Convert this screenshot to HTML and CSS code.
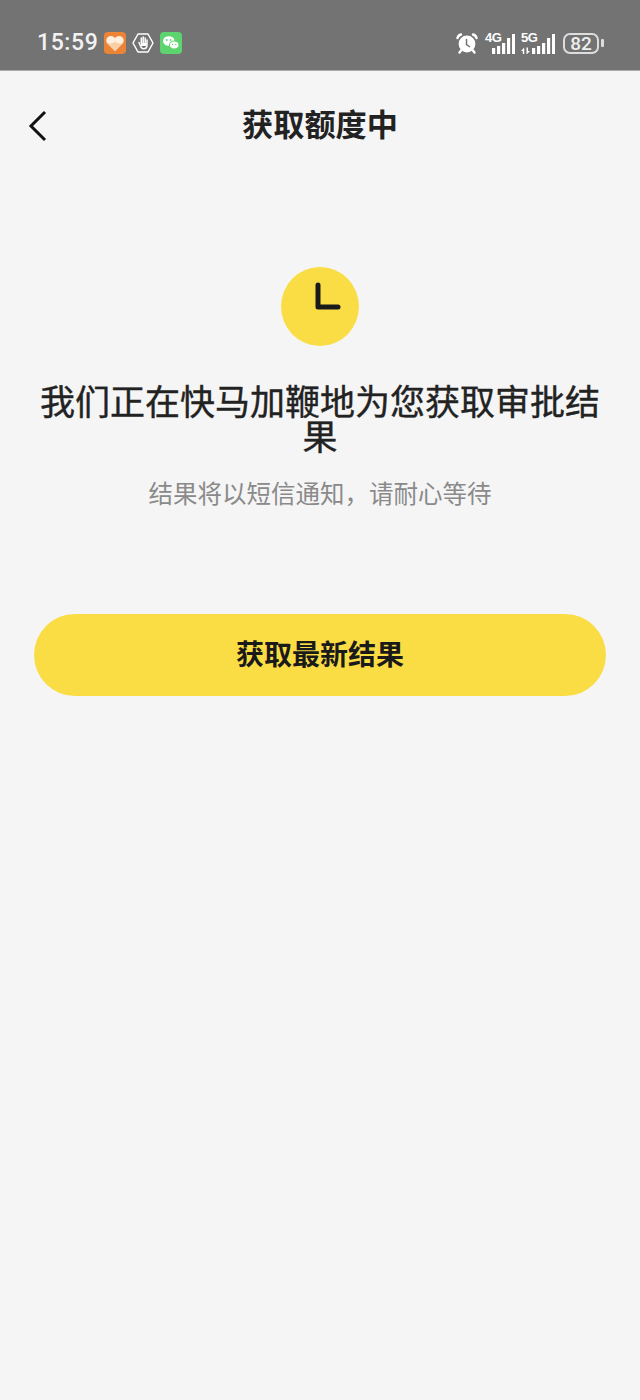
FILE: index.html

```html
<!DOCTYPE html>
<html lang="zh-CN">

<head>
    <meta charset="UTF-8" />
    <meta name="viewport" content="width=device-width, initial-scale=1.0" />
    <title>获取额度中</title>

    <link rel="stylesheet" href="styles.css">
</head>

<body>
    <div class="status-bar">
        <div class="status-left">
            <span class="status-time">15:59</span>
            <svg class="app-icon" width="22" height="22" viewBox="0 0 22 22">
                <rect width="22" height="22" rx="4" fill="#ec8438" />
                <path d="M11 19 L3 11 C1 7.5 3.5 4 7 4 C9 4 10.2 5 11 6.2 C11.8 5 13 4 15 4 C18.5 4 21 7.5 19 11 Z" fill="#fdeedd" />
                <path d="M11 19 L3 11 C6 12.5 9 11.5 11 9.5 C13 11.5 16 12.5 19 11 Z" fill="#f8cfa6" />
            </svg>
            <svg class="app-icon" width="22" height="22" viewBox="0 0 22 22">
                <path d="M6 2 H16 L21 11 L16 20 H6 L1 11 Z" fill="none" stroke="#fff" stroke-width="1.5" stroke-linejoin="round" />
                <path d="M7 10.5 L8.5 14 C9.2 16 10 16.8 11.5 16.8 C13.8 16.8 15 15.4 15 13 V8 M13.2 11 V6 M11.2 11 V5 M9.3 11 V6" fill="none" stroke="#fff" stroke-width="1.5" stroke-linecap="round" />
                <path d="M9 11 H14.5 V14 H9 Z" fill="#fff" />
            </svg>
            <svg class="app-icon" width="22" height="22" viewBox="0 0 22 22">
                <rect width="22" height="22" rx="4" fill="#5ed46f" />
                <ellipse cx="8.8" cy="9" rx="5.8" ry="4.8" fill="#fff" />
                <ellipse cx="14.2" cy="13" rx="4.8" ry="4" fill="#fff" stroke="#5ed46f" stroke-width="1" />
                <circle cx="6.8" cy="8" r="0.9" fill="#5ed46f" />
                <circle cx="10.6" cy="8" r="0.9" fill="#5ed46f" />
                <circle cx="12.6" cy="12.5" r="0.7" fill="#5ed46f" />
                <circle cx="15.8" cy="12.5" r="0.7" fill="#5ed46f" />
            </svg>
        </div>
        <div class="status-right">
            <svg class="alarm" width="22" height="22" viewBox="0 0 22 22">
                <circle cx="11" cy="12" r="8.4" fill="#fff" />
                <path d="M1.5 6 C2 4 3 3 5 2.5 M20.5 6 C20 4 19 3 17 2.5 M5 18.5 L3.5 20.5 M17 18.5 L18.5 20.5" fill="none" stroke="#fff" stroke-width="2.4" stroke-linecap="round" />
                <path d="M10.5 7 V12.5 L14 15" fill="none" stroke="#737373" stroke-width="1.5" />
            </svg>
            <div class="signal signal-4g">
                <span class="signal-type">4G</span>
                <svg width="30" height="20" viewBox="0 0 30 20">
                    <path d="M7 14 H10.2 V20 H7 Z M12 12 H15.2 V20 H12 Z M17 9 H20.2 V20 H17 Z M22 4 H25.2 V20 H22 Z M27 0 H30 V20 H27 Z" fill="#fff" />
                </svg>
            </div>
            <div class="signal signal-5g">
                <span class="signal-type">5G</span>
                <svg width="34" height="20" viewBox="0 0 34 20">
                    <path d="M0 17 L3.2 13.5 V20 H1.8 V17 Z M5.5 13.5 H7 V17 H9 L5.5 20.5 Z M11 14 H14.2 V20 H11 Z M16 12 H19.2 V20 H16 Z M21 9 H24.2 V20 H21 Z M26 4 H29.2 V20 H26 Z M31 0 H34 V20 H31 Z" fill="#fff" />
                </svg>
            </div>
            <div class="battery">
                <span class="battery-body">82</span>
                <span class="battery-tip"></span>
            </div>
        </div>
    </div>

    <header class="nav">
        <svg class="nav-back" width="20" height="32" viewBox="0 0 20 32">
            <path d="M17 2 L3 16 L17 30" fill="none" stroke="#111" stroke-width="3" />
        </svg>
        <h1 class="nav-title">获取额度中</h1>
    </header>

    <main class="result">
        <div class="clock">
            <svg width="28" height="30" viewBox="0 0 28 30">
                <path d="M4 4 V26 H24" fill="none" stroke="#1a1a1a" stroke-width="5" stroke-linecap="round" stroke-linejoin="round" />
            </svg>
        </div>
        <h2 class="result-title">我们正在快马加鞭地为您获取审批结果</h2>
        <p class="result-text">结果将以短信通知，请耐心等待</p>
        <button class="refresh-btn" type="button">获取最新结果</button>
    </main>
</body>

</html>
```

FILE: styles.css

```css
* {
    box-sizing: border-box;
}

body {
    margin: 0;
    min-height: 1400px;
    background: #f5f5f5;
    color: #222;
    font-family: "Noto Sans CJK SC", "Noto Sans", sans-serif;
}

.status-bar {
    height: 71px;
    padding: 32px 36px 0 37px;
    background: #737373;
    border-bottom: 1px solid #aaa;
    display: flex;
    justify-content: space-between;
    align-items: flex-start;
    color: #fff;
}

.status-left {
    display: flex;
    align-items: center;
    gap: 6px;
}

.status-time {
    font-family: Roboto, sans-serif;
    font-size: 23px;
    line-height: 22px;
    font-weight: 500;
    letter-spacing: 0.6px;
    color: #f2f2f2;
}

.status-right {
    display: flex;
    align-items: center;
    gap: 6px;
}

.alarm {
    margin-right: 1px;
}

.signal {
    height: 21px;
    display: flex;
    align-items: flex-end;
    position: relative;
}

.signal svg {
    display: block;
}

.signal-type {
    position: absolute;
    left: 0;
    top: 0;
    font-family: "Liberation Sans", sans-serif;
    font-size: 13px;
    line-height: 10px;
    font-weight: bold;
    letter-spacing: -0.6px;
    color: #fff;
}

.battery {
    display: flex;
    align-items: center;
    gap: 2px;
    margin-left: 2px;
}

.battery-body {
    width: 36px;
    height: 21px;
    border: 2px solid #ddd;
    border-radius: 7px;
    font-family: Roboto, sans-serif;
    font-size: 19px;
    font-weight: 500;
    line-height: 17px;
    text-align: center;
    color: #eee;
}

.battery-tip {
    width: 3px;
    height: 8px;
    background: #ddd;
    border-radius: 1px;
}

.nav {
    height: 109px;
    padding-bottom: 6px;
    display: flex;
    align-items: center;
    justify-content: center;
    position: relative;
}

.nav-back {
    position: absolute;
    left: 28px;
    top: 39px;
}

.nav-title {
    margin: 0;
    font-size: 31.2px;
    line-height: 40px;
    font-weight: 700;
    color: #222;
}

.result {
    padding: 87px 34px 0;
    display: flex;
    flex-direction: column;
    align-items: center;
}

.clock {
    width: 78px;
    height: 79px;
    border-radius: 50%;
    background: #fadd45;
    display: flex;
    align-items: center;
    justify-content: center;
    padding: 0 0 22px 16px;
}

.result-title {
    margin: 36px 0 0;
    width: 564px;
    font-size: 35px;
    line-height: 35px;
    font-weight: 400;
    -webkit-text-stroke: 0.4px #222;
    text-align: center;
    color: #222;
}

.result-text {
    margin: 24px 0 0;
    font-size: 24.5px;
    line-height: 34px;
    text-align: center;
    color: #8a8a8a;
}

.refresh-btn {
    margin-top: 104px;
    width: 100%;
    height: 82px;
    padding: 0 0 4px;
    border: none;
    border-radius: 41px;
    background: #fadd45;
    color: #1a1a1a;
    font-family: inherit;
    font-size: 28px;
    font-weight: 700;
}
```
